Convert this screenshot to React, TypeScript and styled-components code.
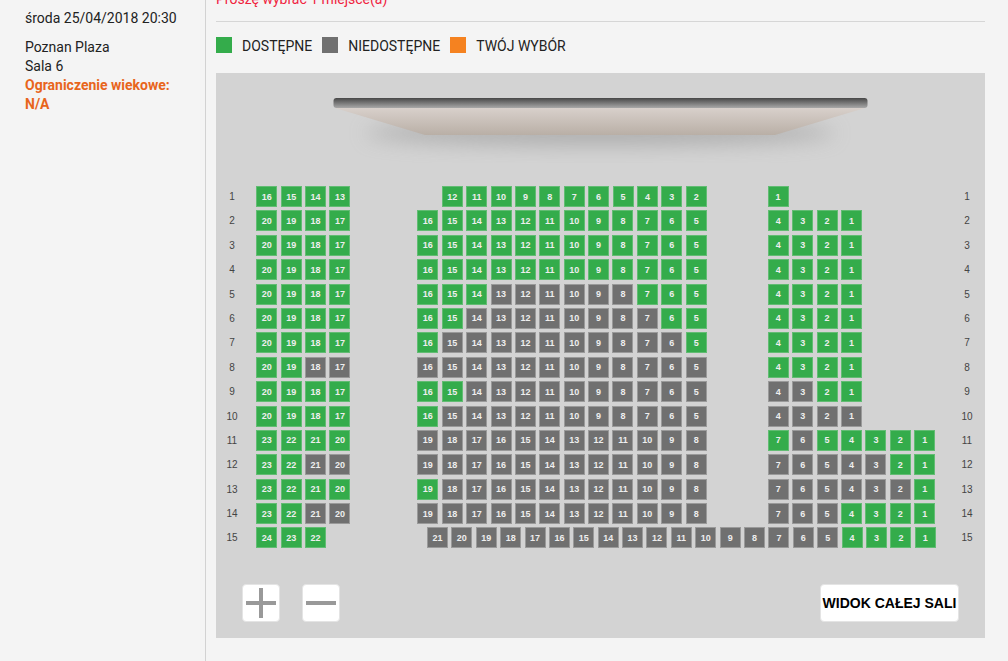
import styled, { createGlobalStyle } from "styled-components";

type SeatStatus = "free" | "taken";

interface SeatBlockData {
  offset: number;
  from: number;
  to: number;
  taken?: number[];
}

interface RowData {
  label: number;
  blocks: SeatBlockData[];
}

const range = (from: number, to: number) => {
  const out: number[] = [];
  for (let n = from; n >= to; n--) out.push(n);
  return out;
};

const ROWS: RowData[] = [
  {
    label: 1,
    blocks: [
      { offset: 0, from: 16, to: 13 },
      { offset: 91.3, from: 12, to: 2 },
      { offset: 60.9, from: 1, to: 1 },
    ],
  },
  ...[2, 3, 4].map((label) => ({
    label,
    blocks: [
      { offset: 0, from: 20, to: 17 },
      { offset: 66.9, from: 16, to: 5 },
      { offset: 61.2, from: 4, to: 1 },
    ],
  })),
  {
    label: 5,
    blocks: [
      { offset: 0, from: 20, to: 17 },
      { offset: 66.9, from: 16, to: 5, taken: range(13, 8) },
      { offset: 61.2, from: 4, to: 1 },
    ],
  },
  {
    label: 6,
    blocks: [
      { offset: 0, from: 20, to: 17 },
      { offset: 66.9, from: 16, to: 5, taken: range(14, 7) },
      { offset: 61.2, from: 4, to: 1 },
    ],
  },
  {
    label: 7,
    blocks: [
      { offset: 0, from: 20, to: 17 },
      { offset: 66.9, from: 16, to: 5, taken: range(15, 6) },
      { offset: 61.2, from: 4, to: 1 },
    ],
  },
  {
    label: 8,
    blocks: [
      { offset: 0, from: 20, to: 17, taken: [18, 17] },
      { offset: 66.9, from: 16, to: 5, taken: range(16, 5) },
      { offset: 61.2, from: 4, to: 1 },
    ],
  },
  {
    label: 9,
    blocks: [
      { offset: 0, from: 20, to: 17 },
      { offset: 66.9, from: 16, to: 5, taken: range(14, 5) },
      { offset: 61.2, from: 4, to: 1, taken: [4, 3] },
    ],
  },
  {
    label: 10,
    blocks: [
      { offset: 0, from: 20, to: 17 },
      { offset: 66.9, from: 16, to: 5, taken: range(15, 5) },
      { offset: 61.2, from: 4, to: 1, taken: range(4, 1) },
    ],
  },
  {
    label: 11,
    blocks: [
      { offset: 0, from: 23, to: 20 },
      { offset: 66.9, from: 19, to: 8, taken: range(19, 8) },
      { offset: 61.2, from: 7, to: 1, taken: [6] },
    ],
  },
  {
    label: 12,
    blocks: [
      { offset: 0, from: 23, to: 20, taken: [21, 20] },
      { offset: 66.9, from: 19, to: 8, taken: range(19, 8) },
      { offset: 61.2, from: 7, to: 1, taken: range(7, 3) },
    ],
  },
  {
    label: 13,
    blocks: [
      { offset: 0, from: 23, to: 20 },
      { offset: 66.9, from: 19, to: 8, taken: range(18, 8) },
      { offset: 61.2, from: 7, to: 1, taken: range(7, 2) },
    ],
  },
  {
    label: 14,
    blocks: [
      { offset: 0, from: 23, to: 20, taken: [21, 20] },
      { offset: 66.9, from: 19, to: 8, taken: range(19, 8) },
      { offset: 61.2, from: 7, to: 1, taken: [7, 6, 5] },
    ],
  },
  {
    label: 15,
    blocks: [
      { offset: 0, from: 24, to: 22 },
      { offset: 100.9, from: 21, to: 1, taken: range(21, 5) },
    ],
  },
];

const GlobalStyle = createGlobalStyle`
  html, body {
    margin: 0;
    padding: 0;
    background: #f4f4f4;
  }
  body {
    font-family: Roboto, "Liberation Sans", sans-serif;
    font-size: 14px;
    color: #222;
  }
`;

const Page = styled.div`
  display: flex;
  width: 1008px;
  height: 661px;
  overflow: hidden;
`;

const Sidebar = styled.aside`
  box-sizing: border-box;
  width: 206px;
  flex: none;
  padding: 9px 25px 0;
  border-right: 1px solid #d2d2d2;
  line-height: 19px;
`;

const ShowDate = styled.div`
  margin-bottom: 10px;
`;

const AgeLimit = styled.div`
  color: #e8651c;
  font-weight: 700;
`;

const Main = styled.main`
  width: 769px;
  margin-left: 10px;
`;

const Message = styled.div`
  margin-top: -10px;
  height: 32px;
  box-sizing: border-box;
  border-bottom: 1px solid #d6d6d6;
  color: #f0233f;
  line-height: 19px;
`;

const Legend = styled.ul`
  display: flex;
  align-items: center;
  gap: 10px;
  height: 16px;
  margin: 15px 0 20px;
  padding: 0;
  list-style: none;
`;

const LegendItem = styled.li`
  display: flex;
  align-items: center;
  gap: 10px;
`;

const LegendLabel = styled.span`
  padding-top: 2px;
`;

const Swatch = styled.span<{ $color: string }>`
  width: 16px;
  height: 16px;
  background: ${(p) => p.$color};
`;

const HallMap = styled.section`
  height: 565px;
  background: #d3d3d3;
  overflow: hidden;
`;

const ScreenArt = styled.svg`
  display: block;
  margin: 20px 0 0 100px;
`;

const Rows = styled.div`
  display: flex;
  flex-direction: column;
  gap: 3.4px;
  margin-top: 23px;
`;

const Row = styled.div`
  display: flex;
  align-items: center;
  height: 21px;
  font-family: "Liberation Sans", Arial, sans-serif;
`;

const RowLabel = styled.span`
  width: 32px;
  flex: none;
  text-align: center;
  font-size: 10px;
  color: #444;
`;

const RowLabelLeft = styled(RowLabel)`
  margin-right: 8.3px;
`;

const RowLabelRight = styled(RowLabel)`
  margin-left: auto;
  margin-right: 2px;
`;

const SeatBlock = styled.div<{ $offset: number }>`
  display: flex;
  gap: 3.4px;
  margin-left: ${(p) => p.$offset}px;
`;

const Seat = styled.span<{ $status: SeatStatus }>`
  box-sizing: border-box;
  display: flex;
  align-items: center;
  justify-content: center;
  width: 21px;
  height: 21px;
  flex: none;
  font-size: 9px;
  font-weight: 700;
  color: #eeeeee;
  background: ${(p) => (p.$status === "free" ? "#34ac4b" : "#707070")};
  border: 1px solid
    ${(p) => (p.$status === "free" ? "#62bc73" : "#9a9a9a")};
`;

const Controls = styled.div`
  display: flex;
  gap: 22px;
  margin: 36px 26px 0 26px;
`;

const ZoomButton = styled.button`
  box-sizing: border-box;
  display: flex;
  align-items: center;
  justify-content: center;
  width: 38px;
  height: 38px;
  padding: 0;
  background: #fff;
  border: 1px solid #e4e4e4;
  border-radius: 4px;
`;

const WholeHallButton = styled.button`
  box-sizing: border-box;
  width: 139px;
  height: 38px;
  margin-left: auto;
  padding: 0;
  background: #fff;
  border: 1px solid #e4e4e4;
  border-radius: 4px;
  font-family: "Liberation Sans", Arial, sans-serif;
  font-size: 14px;
  font-weight: 700;
  color: #000;
  white-space: nowrap;
`;

const Screen = () => (
  <ScreenArt width={569} height={70} viewBox="0 0 569 70" aria-hidden="true">
    <defs>
      <linearGradient id="bar" x1="0" y1="0" x2="0" y2="1">
        <stop offset="0" stopColor="#474747" />
        <stop offset="1" stopColor="#a8a8a8" />
      </linearGradient>
      <linearGradient id="wall" x1="0" y1="0" x2="0" y2="1">
        <stop offset="0" stopColor="#d8d0cb" />
        <stop offset="1" stopColor="#b9afa6" />
      </linearGradient>
      <filter id="blur" x="-20%" y="-100%" width="140%" height="300%">
        <feGaussianBlur stdDeviation="10" />
      </filter>
    </defs>
    <ellipse cx="284" cy="40" rx="235" ry="12" fill="#8f8f8f" opacity="0.55" filter="url(#blur)" />
    <polygon points="19,15 549,15 459,42 109,42" fill="url(#wall)" />
    <rect x="17.5" y="5" width="534" height="10" rx="3" fill="url(#bar)" />
  </ScreenArt>
);

const App = () => (
  <>
    <GlobalStyle />
    <Page>
      <Sidebar>
        <ShowDate>środa 25/04/2018 20:30</ShowDate>
        <div>Poznan Plaza</div>
        <div>Sala 6</div>
        <AgeLimit>
          Ograniczenie wiekowe:
          <br />
          N/A
        </AgeLimit>
      </Sidebar>
      <Main>
        <Message>Proszę wybrać 1 miejsce(a)</Message>
        <Legend>
          <LegendItem>
            <Swatch $color="#34ac4b" />
            <LegendLabel>DOSTĘPNE</LegendLabel>
          </LegendItem>
          <LegendItem>
            <Swatch $color="#707070" />
            <LegendLabel>NIEDOSTĘPNE</LegendLabel>
          </LegendItem>
          <LegendItem>
            <Swatch $color="#f58220" />
            <LegendLabel>TWÓJ WYBÓR</LegendLabel>
          </LegendItem>
        </Legend>
        <HallMap>
          <Screen />
          <Rows>
            {ROWS.map((row) => (
              <Row key={row.label}>
                <RowLabelLeft>{row.label}</RowLabelLeft>
                {row.blocks.map((block) => (
                  <SeatBlock key={block.from} $offset={block.offset}>
                    {range(block.from, block.to).map((n) => (
                      <Seat
                        key={n}
                        $status={block.taken?.includes(n) ? "taken" : "free"}
                      >
                        {n}
                      </Seat>
                    ))}
                  </SeatBlock>
                ))}
                <RowLabelRight>{row.label}</RowLabelRight>
              </Row>
            ))}
          </Rows>
          <Controls>
            <ZoomButton aria-label="Powiększ">
              <svg width="30" height="30" viewBox="0 0 30 30">
                <path d="M0 15h30M15 0v30" stroke="#999" strokeWidth="4" />
              </svg>
            </ZoomButton>
            <ZoomButton aria-label="Pomniejsz">
              <svg width="30" height="30" viewBox="0 0 30 30">
                <path d="M0 15h30" stroke="#999" strokeWidth="4" />
              </svg>
            </ZoomButton>
            <WholeHallButton>WIDOK CAŁEJ SALI</WholeHallButton>
          </Controls>
        </HallMap>
      </Main>
    </Page>
  </>
);

export default App;
